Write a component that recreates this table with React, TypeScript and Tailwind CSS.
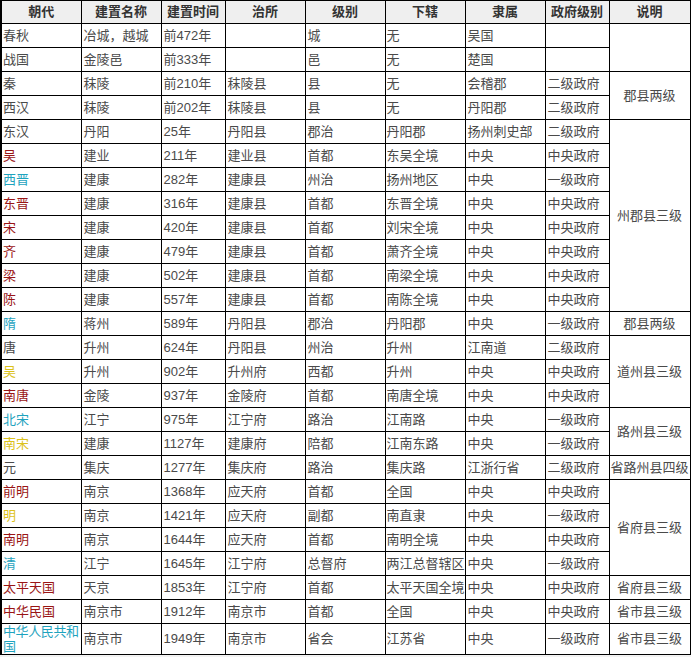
import React from "react";

type Row = {
  d: React.ReactNode;
  c?: string;
  n: string;
  t: string;
  z: string;
  j: string;
  x: string;
  l: string;
  g: string;
  s?: { text: string; span: number };
};

const RED = "text-[#9a1515]";
const TEAL = "text-[#1fa3be]";
const YEL = "text-[#dcc21a]";

const rows: Row[] = [
  { d: "春秋", n: "冶城，越城", t: "前472年", z: "", j: "城", x: "无", l: "吴国", g: "", s: { text: "", span: 2 } },
  { d: "战国", n: "金陵邑", t: "前333年", z: "", j: "邑", x: "无", l: "楚国", g: "" },
  { d: "秦", n: "秣陵", t: "前210年", z: "秣陵县", j: "县", x: "无", l: "会稽郡", g: "二级政府", s: { text: "郡县两级", span: 2 } },
  { d: "西汉", n: "秣陵", t: "前202年", z: "秣陵县", j: "县", x: "无", l: "丹阳郡", g: "二级政府" },
  { d: "东汉", n: "丹阳", t: "25年", z: "丹阳县", j: "郡治", x: "丹阳郡", l: "扬州刺史部", g: "二级政府", s: { text: "州郡县三级", span: 8 } },
  { d: "吴", c: RED, n: "建业", t: "211年", z: "建业县", j: "首都", x: "东吴全境", l: "中央", g: "中央政府" },
  { d: "西晋", c: TEAL, n: "建康", t: "282年", z: "建康县", j: "州治", x: "扬州地区", l: "中央", g: "一级政府" },
  { d: "东晋", c: RED, n: "建康", t: "316年", z: "建康县", j: "首都", x: "东晋全境", l: "中央", g: "中央政府" },
  { d: "宋", c: RED, n: "建康", t: "420年", z: "建康县", j: "首都", x: "刘宋全境", l: "中央", g: "中央政府" },
  { d: "齐", c: RED, n: "建康", t: "479年", z: "建康县", j: "首都", x: "萧齐全境", l: "中央", g: "中央政府" },
  { d: "梁", c: RED, n: "建康", t: "502年", z: "建康县", j: "首都", x: "南梁全境", l: "中央", g: "中央政府" },
  { d: "陈", c: RED, n: "建康", t: "557年", z: "建康县", j: "首都", x: "南陈全境", l: "中央", g: "中央政府" },
  { d: "隋", c: TEAL, n: "蒋州", t: "589年", z: "丹阳县", j: "郡治", x: "丹阳郡", l: "中央", g: "一级政府", s: { text: "郡县两级", span: 1 } },
  { d: "唐", n: "升州", t: "624年", z: "丹阳县", j: "州治", x: "升州", l: "江南道", g: "二级政府", s: { text: "道州县三级", span: 3 } },
  { d: "吴", c: YEL, n: "升州", t: "902年", z: "升州府", j: "西都", x: "升州", l: "中央", g: "中央政府" },
  { d: "南唐", c: RED, n: "金陵", t: "937年", z: "金陵府", j: "首都", x: "南唐全境", l: "中央", g: "中央政府" },
  { d: "北宋", c: TEAL, n: "江宁", t: "975年", z: "江宁府", j: "路治", x: "江南路", l: "中央", g: "一级政府", s: { text: "路州县三级", span: 2 } },
  { d: "南宋", c: YEL, n: "建康", t: "1127年", z: "建康府", j: "陪都", x: "江南东路", l: "中央", g: "一级政府" },
  { d: "元", n: "集庆", t: "1277年", z: "集庆府", j: "路治", x: "集庆路", l: "江浙行省", g: "二级政府", s: { text: "省路州县四级", span: 1 } },
  { d: "前明", c: RED, n: "南京", t: "1368年", z: "应天府", j: "首都", x: "全国", l: "中央", g: "中央政府", s: { text: "省府县三级", span: 4 } },
  { d: "明", c: YEL, n: "南京", t: "1421年", z: "应天府", j: "副都", x: "南直隶", l: "中央", g: "一级政府" },
  { d: "南明", c: RED, n: "南京", t: "1644年", z: "应天府", j: "首都", x: "南明全境", l: "中央", g: "中央政府" },
  { d: "清", c: TEAL, n: "江宁", t: "1645年", z: "江宁府", j: "总督府", x: "两江总督辖区", l: "中央", g: "一级政府" },
  { d: "太平天国", c: RED, n: "天京", t: "1853年", z: "江宁府", j: "首都", x: "太平天国全境", l: "中央", g: "中央政府", s: { text: "省府县三级", span: 1 } },
  { d: "中华民国", c: RED, n: "南京市", t: "1912年", z: "南京市", j: "首都", x: "全国", l: "中央", g: "中央政府", s: { text: "省市县三级", span: 1 } },
  {
    d: (
      <>
        中华人民共和
        <br />国
      </>
    ),
    c: TEAL,
    n: "南京市",
    t: "1949年",
    z: "南京市",
    j: "省会",
    x: "江苏省",
    l: "中央",
    g: "一级政府",
    s: { text: "省市县三级", span: 1 },
  },
];

const headers = ["朝代", "建置名称", "建置时间", "治所", "级别", "下辖", "隶属", "政府级别", "说明"];
const widths = [80, 80, 64, 80, 80, 80, 80, 64, 81];

const td = "border border-black pl-[2px] pr-0 py-0 align-middle text-left whitespace-nowrap";

export default function App() {
  return (
    <div
      className="w-[691px] h-[657px] bg-[#f2f2f2] text-[13px] text-[#4a4a4a]"
      style={{ fontFamily: '"Liberation Sans", "Noto Sans CJK SC", sans-serif' }}
    >
      <table className="table-fixed border-collapse w-[689px] bg-white border-l-2 border-l-black leading-[16px]">
        <colgroup>
          {widths.map((w, i) => (
            <col key={i} style={{ width: w }} />
          ))}
        </colgroup>
        <thead>
          <tr className="h-[23px] bg-[#efefef]">
            {headers.map((h) => (
              <th key={h} className="border border-black font-bold text-center text-[#333] p-0">
                {h}
              </th>
            ))}
          </tr>
        </thead>
        <tbody>
          {rows.map((r, i) => {
            const last = i === rows.length - 1;
            return (
              <tr key={i} className={last ? "h-[31px]" : "h-[24px]"}>
                <td
                  className={`border border-black pl-[1px] pr-0 py-0 align-middle text-left whitespace-nowrap overflow-visible ${
                    last ? "leading-[15px] tracking-[-0.4px]" : ""
                  } ${r.c ?? ""}`}
                >
                  {r.d}
                </td>
                <td className={td}>{r.n}</td>
                <td className={td}>{r.t}</td>
                <td className={td}>{r.z}</td>
                <td className={td}>{r.j}</td>
                <td className={`${td} pl-px`}>{r.x}</td>
                <td className={td}>{r.l}</td>
                <td className={td}>{r.g}</td>
                {r.s && (
                  <td
                    rowSpan={r.s.span}
                    className="border border-black px-0 text-center align-middle whitespace-nowrap"
                  >
                    {r.s.text}
                  </td>
                )}
              </tr>
            );
          })}
        </tbody>
      </table>
    </div>
  );
}
